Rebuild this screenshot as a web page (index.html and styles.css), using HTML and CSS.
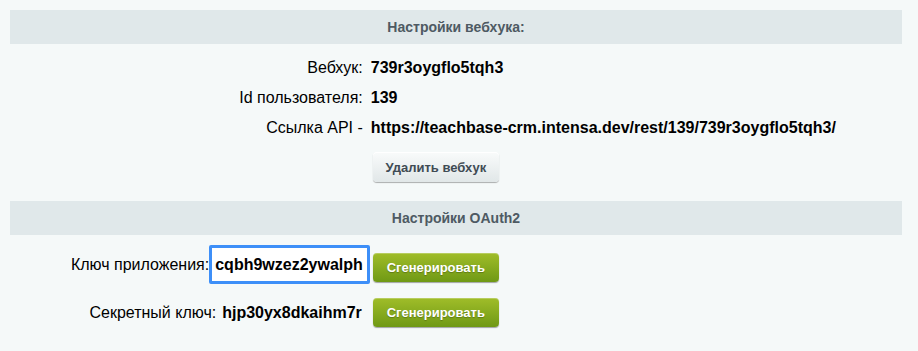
FILE: index.html
```html
<!DOCTYPE html>
<html lang="ru">
<head>
<meta charset="utf-8">
<link rel="stylesheet" href="styles.css">
</head>
<body>
<div class="page">
  <div class="heading">Настройки вебхука:</div>
  <div class="grid">
    <div class="label">Вебхук:</div>
    <div class="value">739r3oygflo5tqh3</div>
    <div class="label">Id пользователя:</div>
    <div class="value">139</div>
    <div class="label">Ссылка API -</div>
    <div class="value">https://teachbase-crm.intensa.dev/rest/139/739r3oygflo5tqh3/</div>
  </div>
  <div class="actions">
    <div></div>
    <div class="value"><button class="btn">Удалить вебхук</button></div>
  </div>
  <div class="heading heading-2">Настройки OAuth2</div>
  <div class="oauth">
    <div class="oauth-row">
      <div class="label">Ключ приложения:<span class="key-box">cqbh9wzez2ywalph</span></div>
      <div class="value"><button class="btn btn-green btn-first">Сгенерировать</button></div>
    </div>
    <div class="oauth-row oauth-row-2">
      <div class="label">Секретный ключ: <b class="key">hjp30yx8dkaihm7r</b></div>
      <div class="value"><button class="btn btn-green">Сгенерировать</button></div>
    </div>
  </div>
</div>
</body>
</html>
```
FILE: styles.css
```css
html, body {
  margin: 0;
  padding: 0;
  background: #f5f9f9;
}
body {
  font-family: "Liberation Sans", Arial, sans-serif;
  font-size: 16px;
  color: #000;
}
.page {
  padding: 10px 16px 10px 10px;
}
.heading {
  height: 34px;
  line-height: 34px;
  background: #e0e8ea;
  text-align: center;
  font-weight: bold;
  font-size: 14px;
  color: #4e5a63;
}
.grid {
  display: grid;
  grid-template-columns: 40% 60%;
  grid-auto-rows: 30px;
  align-items: center;
  padding-top: 9px;
}
.actions {
  display: grid;
  grid-template-columns: 40% 60%;
  padding-top: 9px;
}
.label {
  text-align: right;
  padding-right: 4px;
  color: #000;
}
.value {
  padding-left: 4px;
  font-weight: bold;
}
.btn {
  display: block;
  font-family: "Liberation Sans", Arial, sans-serif;
  font-size: 13px;
  font-weight: bold;
  height: 30px;
  width: 126px;
  border: none;
  border-radius: 4px;
  color: #3f4b54;
  background: linear-gradient(#f9fbfb, #e1e7e8);
  box-shadow: 0 1px 1px rgba(0,0,0,0.3), inset 0 1px 0 #fff;
  margin-left: 2px;
}
.heading-2 {
  margin-top: 19px;
}
.oauth {
  padding-top: 10px;
}
.oauth-row {
  display: grid;
  grid-template-columns: 40% 60%;
  align-items: center;
}
.oauth-row-2 {
  margin-top: 14px;
  height: 29px;
}
.oauth-row .label {
  padding-right: 0;
  display: flex;
  justify-content: flex-end;
  align-items: center;
  white-space: nowrap;
}
.key-box {
  display: inline-block;
  box-sizing: border-box;
  height: 39px;
  line-height: 33px;
  padding: 0 4px 0 3px;
  border: 3px solid #3d8ff8;
  border-radius: 2px;
  font-weight: bold;
  font-size: 16px;
  background: #fff;
  margin-right: -3px;
}
.key {
  margin-left: 6px;
  margin-right: 5px;
  font-size: 16px;
}
.btn-green {
  height: 29px;
  color: #fff;
  text-shadow: 0 1px 1px rgba(0,0,0,0.25);
  background: linear-gradient(#a0bd29, #6f9915);
  box-shadow: 0 1px 1px rgba(0,0,0,0.35), inset 0 1px 0 rgba(255,255,255,0.25);
}
.btn-first {
  margin-top: 6px;
}
```
